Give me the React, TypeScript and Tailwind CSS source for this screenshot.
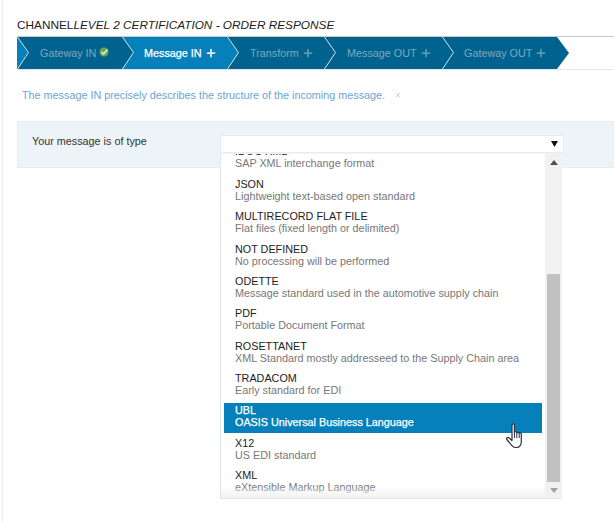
import React from 'react';
import { Plus, X } from 'lucide-react';

const steps = [
  { label: 'Gateway IN', width: 'w-[105px]', pad: 'pl-[23px]', done: true },
  { label: 'Message IN', width: 'w-[105px]', pad: 'pl-[22px]', active: true },
  { label: 'Transform', width: 'w-[97px]', pad: 'pl-[23px]' },
  { label: 'Message OUT', width: 'w-[118px]', pad: 'pl-[23px]' },
  { label: 'Gateway OUT', width: 'w-[115px]', pad: 'pl-[22px]' },
];

const options = [
  ['JSON', 'Lightweight text-based open standard'],
  ['MULTIRECORD FLAT FILE', 'Flat files (fixed length or delimited)'],
  ['NOT DEFINED', 'No processing will be performed'],
  ['ODETTE', 'Message standard used in the automotive supply chain'],
  ['PDF', 'Portable Document Format'],
  ['ROSETTANET', 'XML Standard mostly addresseed to the Supply Chain area'],
  ['TRADACOM', 'Early standard for EDI'],
  ['UBL', 'OASIS Universal Business Language'],
  ['X12', 'US EDI standard'],
  ['XML', 'eXtensible Markup Language'],
];

const Chevron = () => (
  <svg className="absolute left-0 top-0 z-10" width="14" height="32" viewBox="0 0 14 32">
    <path d="M0.5 0 L11.5 15.5 L0.5 32" fill="none" stroke="#d5e4ec" strokeWidth="1" />
  </svg>
);

const Hand = () => (
  <svg className="absolute left-[505px] top-[422px] z-30" width="21" height="28" viewBox="0 0 21 28">
    <path
      d="M7 3c0-1.600 2.400-1.600 2.400 0v7.500c.2-1 2.200-1 2.400 0v.5c.3-1 2.200-1 2.400 0v.5c.3-.9 2-.8 2.100.3V20c0 3-2 5.500-4.500 5.500h-1.300c-1.800 0-2.800-1-3.800-2.200L1.800 17.500c-.8-1.400.8-2.600 2-1.700L7 18.500z"
      fill="#fff"
      stroke="#2b3040"
      strokeWidth="1.200"
      strokeLinejoin="round"
    />
    <path d="M9.400 10.500V16M11.800 11V16M14.200 11.500V16" stroke="#2b3040" strokeWidth="1" fill="none" />
  </svg>
);

export default function App() {
  return (
    <div className="relative w-[614px] h-[522px] overflow-hidden bg-white font-['Liberation_Sans',Arial,sans-serif] text-[10.8px]">
      <div className="ml-[2px] h-full border-l border-[#ececec] pl-[14px] pt-[18px]">
        <h1 className="h-[18px] text-[11.8px] leading-[15px] text-[#1d1d1d] font-normal">
          CHANNEL<em className="font-normal">LEVEL 2 CERTIFICATION - ORDER RESPONSE</em>
        </h1>

        {/* Stepper */}
        <div className="relative h-[34px] border-t border-b border-t-[#c3ccd2] border-b-[#e6e6e6]">
          <div className="flex h-[32px]">
            {steps.map((s) => (
              <div
                key={s.label}
                className={`relative flex-none flex items-center bg-[#00628f] ${s.width} ${s.pad} ${s.active ? 'z-[5] text-white [-webkit-text-stroke:0.25px_white]' : 'text-[#7fa9c0]'}`}
              >
                {s.active && (
                  <svg className="absolute left-0 top-0" width="118" height="32" viewBox="0 0 118 32">
                    <polygon points="0,0 105,0 117,16 105,32 0,32 12,16" fill="#0580bb" />
                  </svg>
                )}
                {s.label === 'Gateway IN' && (
                  <svg className="absolute left-0 top-0" width="13" height="32" viewBox="0 0 13 32">
                    <polygon points="0,0 11,16 0,32" fill="#0580bb" />
                  </svg>
                )}
                <Chevron />
                <span className="relative z-10 pt-px whitespace-nowrap">{s.label}</span>
                {s.done ? (
                  <svg className="relative z-10 ml-[3px] -mt-0.5" width="10" height="10" viewBox="0 0 10 10">
                    <circle cx="5" cy="5" r="4.500" fill="#6aa84f" />
                    <path d="M2.500 5l2 2 4-4.500" stroke="#e6f2dd" strokeWidth="1.500" fill="none" />
                  </svg>
                ) : (
                  <Plus
                    className={`relative z-10 ml-[3px] ${s.active ? 'text-[#dcedf6]' : 'text-[#5e97b3]'}`}
                    size={12}
                    strokeWidth={3.5}
                  />
                )}
              </div>
            ))}
            <svg className="flex-none" width="12" height="32" viewBox="0 0 12 32">
              <polygon points="0,0 12,16 0,32" fill="#00628f" />
            </svg>
          </div>
        </div>

        <p className="mt-[18px] h-[33px] pl-[5px] flex items-start leading-[14px] text-[#6ba5d4]">
          The message IN precisely describes the structure of the incoming message.
          <X className="ml-[9px] mt-[3px] text-[#c3d4e2]" size={8} strokeWidth={3} />
        </p>

        <div className="h-[47px] border border-[#e3eef5] bg-[#edf4f8] pl-[14px] pt-[12px] text-[#333] leading-[14px]">
          Your message is of type
        </div>
      </div>

      {/* Select box */}
      <div className="absolute left-[220px] top-[135px] z-20 flex h-[18px] w-[344px] items-center justify-end border border-[#e3eef5] bg-white pr-[5px]">
        <svg width="7" height="6" viewBox="0 0 7 6">
          <polygon points="0,0 7,0 3.500,6" fill="#111" />
        </svg>
      </div>

      {/* Dropdown list */}
      <div className="absolute left-[220px] top-[154px] z-20 h-[345px] w-[342px] overflow-hidden border-l border-b border-[#dfe8ee] bg-white">
        <div className="-mt-[9px] pl-[14px] leading-[12px]">
          <div className="text-[#222]">IDOC XML</div>
          <div className="text-[#777]">SAP XML interchange format</div>
        </div>
        <div className="pt-[8px]">
          {options.map(([name, desc]) => {
            const hot = name === 'UBL';
            return (
              <div
                key={name}
                className={`ml-[3px] mr-[20px] mb-[2.330px] h-[30px] pl-[11px] pt-px leading-[12px] ${hot ? 'bg-[#0580bb] text-white [-webkit-text-stroke:0.25px_white]' : ''}`}
              >
                <div className={hot ? 'text-white' : 'text-[#222]'}>{name}</div>
                <div className={hot ? 'text-white' : 'text-[#777]'}>{desc}</div>
              </div>
            );
          })}
        </div>
        <div className="absolute bottom-0 left-0 right-[17px] h-[12px] bg-gradient-to-b from-transparent to-[#f1f1f1]" />

        {/* Scrollbar */}
        <div className="absolute right-0 top-0 bottom-0 flex w-[17px] flex-col items-center bg-[#f1f1f1]">
          <svg className="mt-[6px]" width="8" height="5" viewBox="0 0 8 5">
            <polygon points="4,0 8,5 0,5" fill="#505050" />
          </svg>
          <div className="mt-[109px] h-[208px] w-[13px] bg-[#c1c1c1]" />
          <svg className="mt-[6px]" width="8" height="5" viewBox="0 0 8 5">
            <polygon points="0,0 8,0 4,5" fill="#a3a3a3" />
          </svg>
        </div>
      </div>

      <Hand />
    </div>
  );
}
